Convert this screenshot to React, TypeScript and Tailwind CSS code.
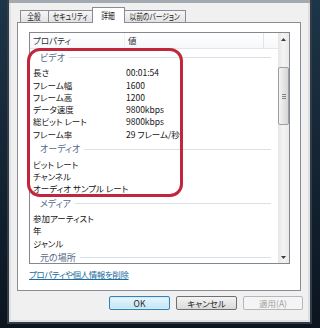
import {FC} from 'react';

interface Group { name: string; rows: [string, string][] }

const groups: Group[] = [
  {name: 'ビデオ', rows: [['長さ', '00:01:54'], ['フレーム幅', '1600'], ['フレーム高', '1200'], ['データ速度', '9800kbps'], ['総ビット レート', '9800kbps'], ['フレーム率', '29 フレーム/秒']]},
  {name: 'オーディオ', rows: [['ビット レート', ''], ['チャンネル', ''], ['オーディオ サンプル レート', '']]},
  {name: 'メディア', rows: [['参加アーティスト', ''], ['年', ''], ['ジャンル', '']]},
  {name: '元の場所', rows: []},
];

const Arrow: FC<{down?: boolean}> = ({down}) => (
  <svg width="5" height="3" viewBox="0 0 5 3" className={down ? 'rotate-180' : ''}>
    <path d="M2.5 0 L5 3 L0 3 Z" fill="#3d3d3d" />
  </svg>
);

const Tab: FC<{label: string; w: string; active?: boolean}> = ({label, w, active}) => (
  <div className={`-ml-px flex items-center justify-center overflow-hidden whitespace-nowrap border border-b-0 border-[#898c95] text-[#1e1e1e] ${w} ${active ? 'z-10 h-[16px] bg-white pb-[1px]' : 'mb-px h-[12px] bg-gradient-to-b from-[#f6f6f6] to-[#e2e2e2]'}`}>
    <span className="inline-block scale-x-75 leading-none">{label}</span>
  </div>
);

const App: FC = () => (
  <div className="relative h-[328px] w-[320px] overflow-hidden bg-gradient-to-b from-[#1d3549] to-[#0b1520] font-['Noto_Sans_CJK_JP','Liberation_Sans',sans-serif] text-[8.5px] [font-feature-settings:'palt']">
    {/* Window frame */}
    <div className="ml-[7px] h-[324px] w-[305px] bg-[#363b42] px-[2px] pb-[2px]">
      <div className="flex h-full flex-col border-t-[3px] border-[#a3a9b0] bg-[#dce0e5] px-[2px] pb-[2px]">
        <div className="flex flex-1 flex-col bg-[#f0f0f0] pl-[6px] pt-[4px]">
          {/* Tabs */}
          <div className="relative z-10 -mb-px flex h-[16px] items-end pl-[4px] text-[9px]">
            <Tab label="全般" w="w-[29px]" />
            <Tab label="セキュリティ" w="w-[45px]" />
            <Tab label="詳細" w="w-[33px]" active />
            <Tab label="以前のバージョン" w="w-[62px]" />
          </div>

          {/* Tab page */}
          <div className="flex h-[269px] w-[284px] flex-col border border-[#898c95] bg-white pl-[11px] pt-[9px]">
            <div className="flex h-[232px] w-[261px] border border-[#828790] bg-white">
              <div className="flex w-[248px] flex-col overflow-hidden">
                {/* Header */}
                <div className="flex h-[16px] shrink-0 border-b border-[#e3e5e8] bg-gradient-to-b from-white to-[#f7f8f9] text-[#2a2f38]">
                  <div className="flex w-[95px] items-center border-r border-[#eef0f2] pl-[3px]">プロパティ</div>
                  <div className="flex w-[139px] items-center border-r border-[#e2e4e7] pl-[3px]">値</div>
                </div>
                {groups.map(g => (
                  <div key={g.name} className="shrink-0">
                    <div className="flex h-[17.5px] items-center pl-[10px] pr-[7px] text-[9px] text-[#55698a]">
                      <span>{g.name}</span>
                      <div className="ml-[4px] h-px flex-1 bg-[#d8e0e8]" />
                    </div>
                    {g.rows.map(([k, v]) => (
                      <div key={k} className="flex h-[12.3px] items-center text-[#141414]">
                        <span className="w-[96px] whitespace-nowrap pl-[3px]">{k}</span>
                        <span className="whitespace-nowrap">{v}</span>
                      </div>
                    ))}
                  </div>
                ))}
              </div>

              {/* Scrollbar */}
              <div className="flex w-[11px] flex-col bg-gradient-to-r from-[#e6e6e6] via-[#f4f4f4] to-[#e9e9e9]">
                <div className="flex h-[12px] items-center justify-center"><Arrow /></div>
                <div className="h-[22px]" />
                <div className="flex h-[58px] flex-col items-center justify-center gap-px rounded-[2px] border border-[#999ea4] bg-gradient-to-r from-[#f4f4f4] to-[#d6d6d6]">
                  <div className="h-px w-[4px] bg-[#7f8488]" />
                  <div className="h-px w-[4px] bg-[#7f8488]" />
                  <div className="h-px w-[4px] bg-[#7f8488]" />
                </div>
                <div className="flex-1" />
                <div className="flex h-[12px] items-center justify-center"><Arrow down /></div>
              </div>
            </div>
            <div className="mt-[4px] flex h-[12px] items-center">
              <span className="tracking-[-0.4px] text-[#1b6c9e] underline">プロパティや個人情報を削除</span>
            </div>
          </div>

          {/* Buttons */}
          <div className="mt-[5px] flex justify-end gap-[6px] pr-[5px]">
            <button type="button" className="flex h-[14px] w-[61px] items-center justify-center rounded-[2px] border border-[#3c7fb1] bg-gradient-to-b from-[#e8f6fd] to-[#c2e4f6] text-[#1e1e1e] shadow-[inset_0_0_0_1px_#c9eefc]">OK</button>
            <button type="button" className="flex h-[14px] w-[61px] items-center justify-center rounded-[2px] border border-[#707070] bg-gradient-to-b from-[#f3f3f3] to-[#dadada] text-[#1e1e1e]">キャンセル</button>
            <button type="button" className="flex h-[14px] w-[60px] items-center justify-center rounded-[2px] border border-[#b5b8bb] bg-[#f4f4f4] text-[#a2a2a2]">適用(A)</button>
          </div>
        </div>
      </div>
    </div>

    {/* Red annotation */}
    <div className="absolute left-[27px] top-[48px] h-[149px] w-[156px] rounded-[13px] border-[3px] border-[#c1263c]" />
  </div>
);

export default App;
